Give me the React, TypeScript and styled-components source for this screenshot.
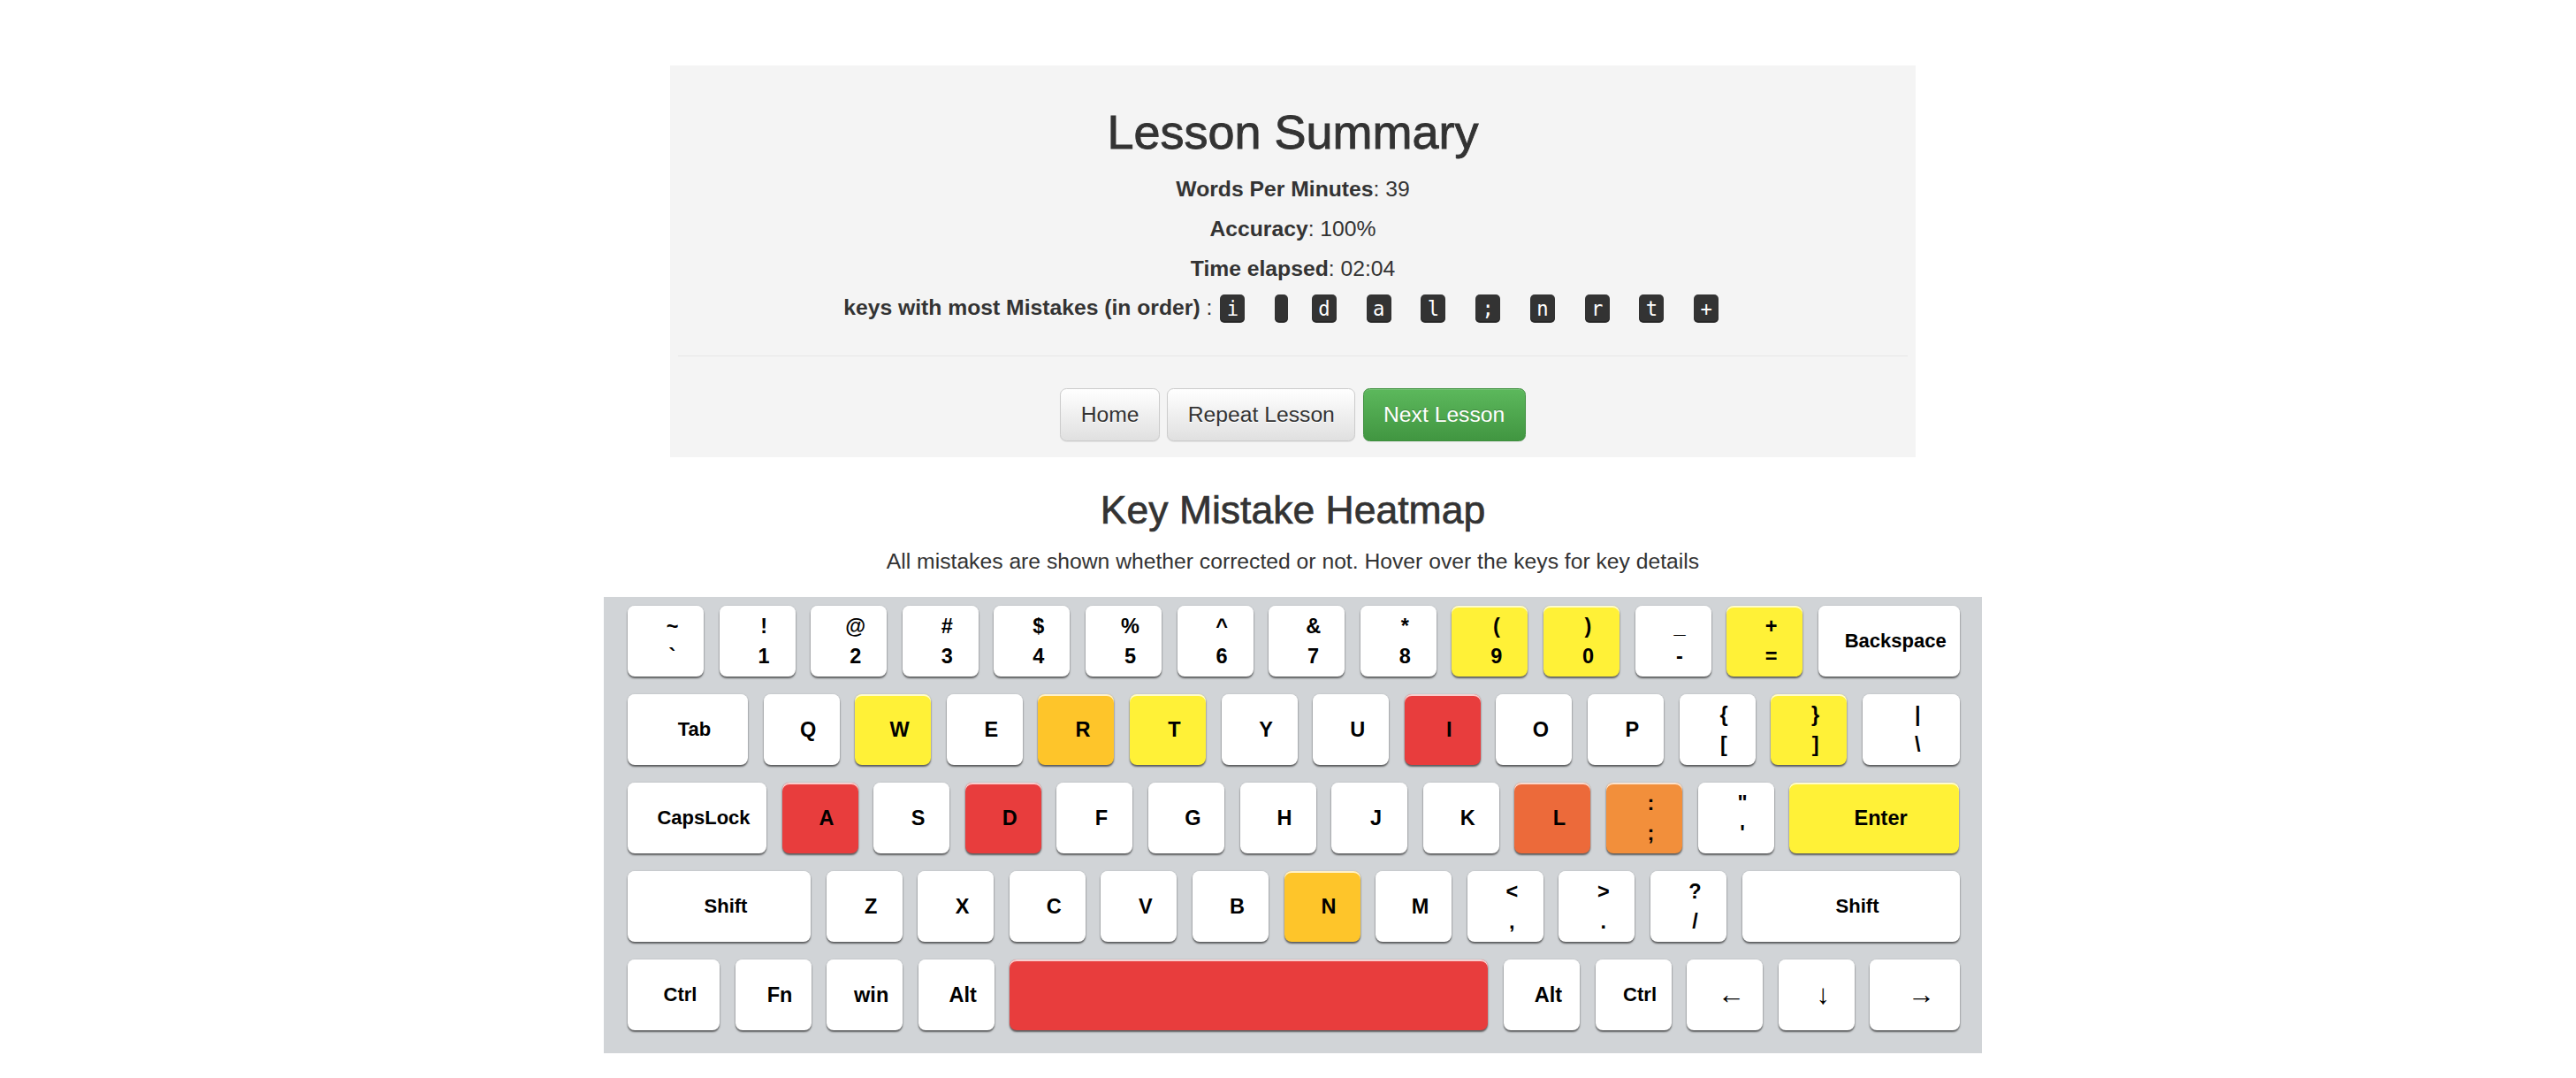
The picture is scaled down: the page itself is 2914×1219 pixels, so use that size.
import React from "react";
import styled, { createGlobalStyle } from "styled-components";

type Heat = "none" | "yellow" | "amber" | "orange" | "hot" | "red";

interface KeyDef {
  top?: string;
  label: string;
  width?: number;
  heat?: Heat;
  small?: boolean;
  arrow?: boolean;
}

const heatColors: Record<Heat, string> = {
  none: "#ffffff",
  yellow: "#fff137",
  amber: "#fec52a",
  orange: "#f28f3b",
  hot: "#ec6a3a",
  red: "#e83d3d",
};

// Keyboard layout, widths in px; default key is 86 wide
const rows: KeyDef[][] = [
  [
    { top: "~", label: "`" },
    { top: "!", label: "1" },
    { top: "@", label: "2" },
    { top: "#", label: "3" },
    { top: "$", label: "4" },
    { top: "%", label: "5" },
    { top: "^", label: "6" },
    { top: "&", label: "7" },
    { top: "*", label: "8" },
    { top: "(", label: "9", heat: "yellow" },
    { top: ")", label: "0", heat: "yellow" },
    { top: "_", label: "-" },
    { top: "+", label: "=", heat: "yellow" },
    { label: "Backspace", width: 160, small: true },
  ],
  [
    { label: "Tab", width: 136, small: true },
    { label: "Q" },
    { label: "W", heat: "yellow" },
    { label: "E" },
    { label: "R", heat: "amber" },
    { label: "T", heat: "yellow" },
    { label: "Y" },
    { label: "U" },
    { label: "I", heat: "red" },
    { label: "O" },
    { label: "P" },
    { top: "{", label: "[" },
    { top: "}", label: "]", heat: "yellow" },
    { top: "|", label: "\\", width: 110 },
  ],
  [
    { label: "CapsLock", width: 157, small: true },
    { label: "A", heat: "red" },
    { label: "S" },
    { label: "D", heat: "red" },
    { label: "F" },
    { label: "G" },
    { label: "H" },
    { label: "J" },
    { label: "K" },
    { label: "L", heat: "hot" },
    { top: ":", label: ";", heat: "orange" },
    { top: '"', label: "'" },
    { label: "Enter", width: 192, heat: "yellow" },
  ],
  [
    { label: "Shift", width: 207, small: true },
    { label: "Z" },
    { label: "X" },
    { label: "C" },
    { label: "V" },
    { label: "B" },
    { label: "N", heat: "amber" },
    { label: "M" },
    { top: "<", label: "," },
    { top: ">", label: "." },
    { top: "?", label: "/" },
    { label: "Shift", width: 246, small: true },
  ],
  [
    { label: "Ctrl", width: 104, small: true },
    { label: "Fn" },
    { label: "win" },
    { label: "Alt" },
    { label: "", width: 541, heat: "red" },
    { label: "Alt" },
    { label: "Ctrl", small: true },
    { label: "←", arrow: true },
    { label: "↓", arrow: true },
    { label: "→", width: 102, arrow: true },
  ],
];

const mistakeKeys = ["i", " ", "d", "a", "l", ";", "n", "r", "t", "+"];

const GlobalStyle = createGlobalStyle`
  body {
    margin: 0;
    background: #ffffff;
    color: #333333;
    font-family: "Liberation Sans", Arial, Helvetica, sans-serif;
  }
`;

const Page = styled.div`
  display: flex;
  flex-direction: column;
  align-items: center;
  padding: 74px 0 28px 11px;
`;

const Summary = styled.section`
  width: 1409px;
  box-sizing: border-box;
  background: #f4f4f4;
  padding: 45.6px 9px 18px;
  text-align: center;
`;

const Title = styled.h2`
  margin: 0 0 11.6px;
  font-size: 54px;
  font-weight: 500;
  line-height: 1.1;
  -webkit-text-stroke: 0.9px #333333;
`;

const StatLine = styled.div`
  font-size: 24.7px;
  line-height: 45px;
`;

const MistakeRow = styled.div`
  display: flex;
  justify-content: center;
  align-items: center;
  height: 43px;
  font-size: 24.7px;
  line-height: 43px;
`;

const MistakeLabel = styled.span`
  margin-right: 9px;
  white-space: pre;
`;

const Kbd = styled.kbd<{ $gap: number }>`
  display: block;
  box-sizing: border-box;
  height: 32px;
  margin: 3px ${(p) => p.$gap}px 0 0;
  padding: 3px 7.4px;
  border-radius: 5px;
  background: #333333;
  color: #ffffff;
  font-family: "DejaVu Sans Mono", "Liberation Mono", monospace;
  font-size: 22.2px;
  line-height: 26px;
  box-shadow: inset 0 -2px 0 rgba(0, 0, 0, 0.25);
`;

const Divider = styled.hr`
  margin: 33px 0 0;
  border: 0;
  border-top: 1px solid #e6e6e6;
`;

const Actions = styled.div`
  display: flex;
  justify-content: center;
  gap: 8.6px;
  padding-top: 36.6px;
`;

const Button = styled.button<{ $primary?: boolean }>`
  padding: 11.2px 22.3px;
  border: 1px solid ${(p) => (p.$primary ? "#3e8f3e" : "#cccccc")};
  border-radius: 7.4px;
  background-image: ${(p) =>
    p.$primary
      ? "linear-gradient(to bottom, #5cb85c 0, #419641 100%)"
      : "linear-gradient(to bottom, #ffffff 0, #e0e0e0 100%)"};
  color: ${(p) => (p.$primary ? "#ffffff" : "#333333")};
  text-shadow: ${(p) =>
    p.$primary ? "0 -1px 0 rgba(0, 0, 0, 0.2)" : "0 1px 0 #ffffff"};
  box-shadow: inset 0 1px 0 rgba(255, 255, 255, 0.15),
    0 1px 1px rgba(0, 0, 0, 0.075);
  font-family: inherit;
  font-size: 24.7px;
  line-height: 35.3px;
  cursor: pointer;
`;

const HeatmapTitle = styled.h3`
  margin: 36.4px 0 14.4px;
  font-size: 44.5px;
  font-weight: 500;
  line-height: 1.1;
  -webkit-text-stroke: 0.7px #333333;
`;

const HeatmapNote = styled.p`
  margin: 0 0 22.9px;
  font-size: 24.7px;
  line-height: 35.3px;
`;

const Keyboard = styled.div`
  display: flex;
  flex-direction: column;
  gap: 20px;
  width: 1559px;
  box-sizing: border-box;
  padding: 10px 0 26px 27px;
  background: #d1d4d7;
`;

const KeyRow = styled.div`
  display: flex;
  gap: 17.6px;
`;

const Key = styled.div<{ $width: number; $heat: Heat; $small?: boolean; $arrow?: boolean }>`
  display: flex;
  flex-direction: column;
  justify-content: center;
  align-items: center;
  flex: none;
  width: ${(p) => p.$width}px;
  height: 80px;
  box-sizing: border-box;
  padding-left: 15px;
  border-radius: 8px;
  background: ${(p) => heatColors[p.$heat]};
  box-shadow: inset 0 2px 0 rgba(255, 255, 255, 0.75),
    0 2px 2px rgba(0, 0, 0, 0.55), 0 0 2px rgba(0, 0, 0, 0.15);
  color: #000000;
  font-size: ${(p) => (p.$arrow ? 31 : p.$small ? 22 : 23.5)}px;
  font-weight: ${(p) => (p.$arrow ? "normal" : "bold")};
  line-height: 34px;
`;

const KeyCap: React.FC<{ def: KeyDef }> = ({ def }) => (
  <Key
    $width={def.width ?? 86}
    $heat={def.heat ?? "none"}
    $small={def.small}
    $arrow={def.arrow}
  >
    {def.top && <span>{def.top}</span>}
    <span>{def.label}</span>
  </Key>
);

const App: React.FC = () => {
  return (
    <>
      <GlobalStyle />
      <Page>
        <Summary>
          <Title>Lesson Summary</Title>
          <StatLine>
            <b>Words Per Minutes</b>: 39
          </StatLine>
          <StatLine>
            <b>Accuracy</b>: 100%
          </StatLine>
          <StatLine>
            <b>Time elapsed</b>: 02:04
          </StatLine>
          <MistakeRow>
            <MistakeLabel>
              <b>keys with most Mistakes (in order)</b> :
            </MistakeLabel>
            {mistakeKeys.map((k, i) => (
              <Kbd
                key={i}
                $gap={
                  i === mistakeKeys.length - 1 ? 26.6 : k === " " ? 27 : 33.6
                }
              >
                {k}
              </Kbd>
            ))}
          </MistakeRow>
          <Divider />
          <Actions>
            <Button>Home</Button>
            <Button>Repeat Lesson</Button>
            <Button $primary>Next Lesson</Button>
          </Actions>
        </Summary>

        <HeatmapTitle>Key Mistake Heatmap</HeatmapTitle>
        <HeatmapNote>
          All mistakes are shown whether corrected or not. Hover over the keys
          for key details
        </HeatmapNote>

        <Keyboard>
          {rows.map((row, r) => (
            <KeyRow key={r}>
              {row.map((def, i) => (
                <KeyCap key={i} def={def} />
              ))}
            </KeyRow>
          ))}
        </Keyboard>
      </Page>
    </>
  );
};

export default App;
